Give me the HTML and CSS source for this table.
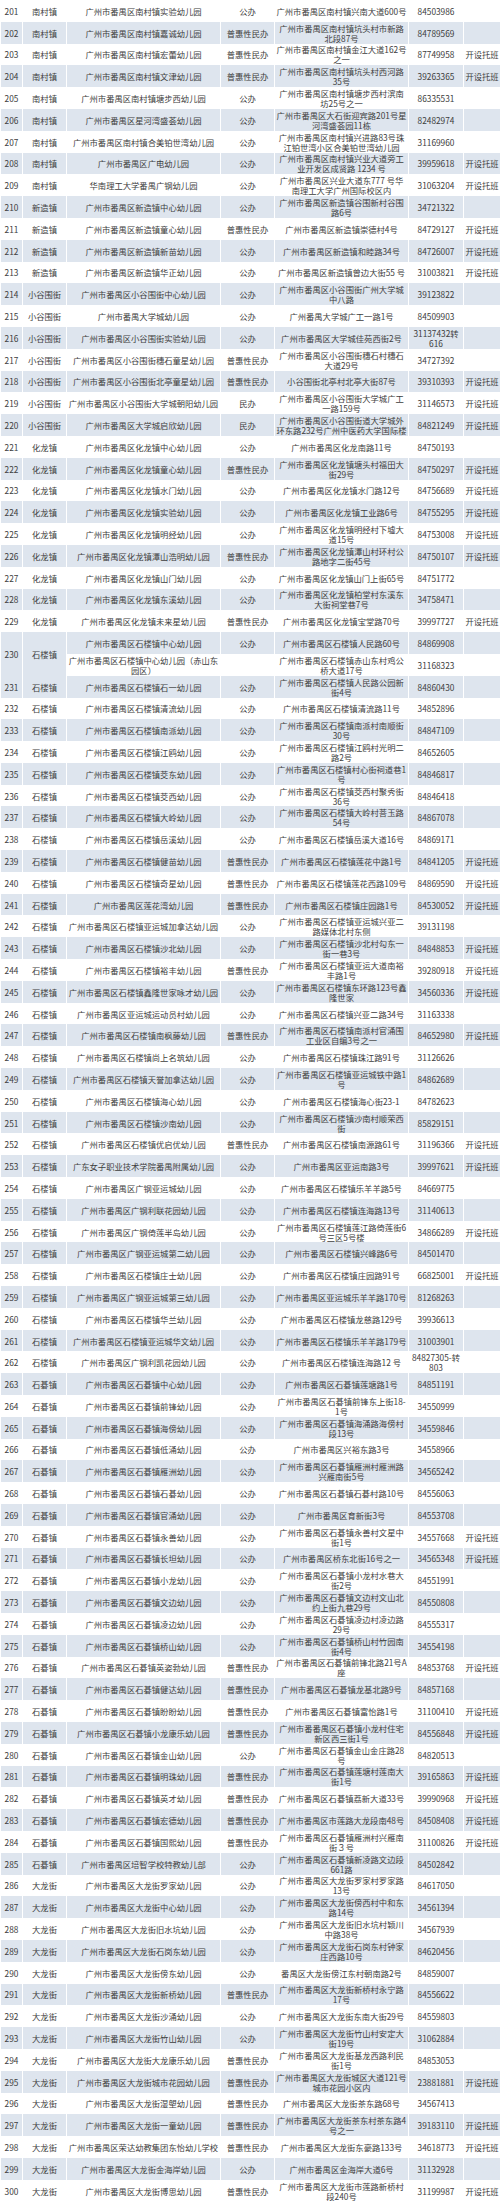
FILE: index.html
```html
<!DOCTYPE html>
<html lang="zh-CN">
<head>
<meta charset="utf-8">
<title>番禺区幼儿园名录</title>
<link rel="stylesheet" href="styles.css">
</head>
<body>
<table class="list">
<colgroup>
<col class="w-no"><col class="w-town"><col class="w-name"><col class="w-type"><col class="w-addr"><col class="w-tel"><col class="w-note">
</colgroup>
<tbody>
<tr><td>201</td><td>南村镇</td><td>广州市番禺区南村镇实验幼儿园</td><td>公办</td><td>广州市番禺区南村镇兴南大道600号</td><td>84503986</td><td></td></tr>
<tr><td>202</td><td>南村镇</td><td>广州市番禺区南村镇嘉诚幼儿园</td><td>普惠性民办</td><td>广州市番禺区南村镇坑头村市新路北段87号</td><td>84789569</td><td></td></tr>
<tr><td>203</td><td>南村镇</td><td>广州市番禺区南村镇宏蕾幼儿园</td><td>普惠性民办</td><td>广州市番禺区南村镇金江大道162号之一</td><td>87749958</td><td>开设托班</td></tr>
<tr><td>204</td><td>南村镇</td><td>广州市番禺区南村镇文津幼儿园</td><td>普惠性民办</td><td>广州市番禺区南村镇坑头村西河路35号</td><td>39263365</td><td>开设托班</td></tr>
<tr><td>205</td><td>南村镇</td><td>广州市番禺区南村镇塘步西幼儿园</td><td>公办</td><td>广州市番禺区南村镇塘步西村滨南坊25号之一</td><td>86335531</td><td></td></tr>
<tr><td>206</td><td>南村镇</td><td>广州市番禺区星河湾盛荟幼儿园</td><td>公办</td><td>广州市番禺区大石街迎宾路201号星河湾盛荟园11栋</td><td>82482974</td><td></td></tr>
<tr><td>207</td><td>南村镇</td><td>广州市番禺区南村镇合美铂世湾幼儿园</td><td>公办</td><td>广州市番禺区南村镇兴进路83号珠江铂世湾小区合美铂世湾幼儿园</td><td>31169960</td><td></td></tr>
<tr><td>208</td><td>南村镇</td><td>广州市番禺区广电幼儿园</td><td>公办</td><td>广州市番禺区南村镇兴业大道旁工业开发区成贤路 1234 号</td><td>39959618</td><td>开设托班</td></tr>
<tr><td>209</td><td>南村镇</td><td>华南理工大学番禺广钢幼儿园</td><td>公办</td><td>广州市番禺区兴业大道东777 号华南理工大学广州国际校区内</td><td>31063204</td><td>开设托班</td></tr>
<tr><td>210</td><td>新造镇</td><td>广州市番禺区新造镇中心幼儿园</td><td>公办</td><td>广州市番禺区新造镇谷围新村谷围路6号</td><td>34721322</td><td></td></tr>
<tr><td>211</td><td>新造镇</td><td>广州市番禺区新造镇童心幼儿园</td><td>普惠性民办</td><td>广州市番禺区新造镇崇德村4号</td><td>84729127</td><td>开设托班</td></tr>
<tr><td>212</td><td>新造镇</td><td>广州市番禺区新造镇新苗幼儿园</td><td>公办</td><td>广州市番禺区新造镇和睦路34号</td><td>84726007</td><td>开设托班</td></tr>
<tr><td>213</td><td>新造镇</td><td>广州市番禺区新造镇华正幼儿园</td><td>公办</td><td>广州市番禺区新造镇曾边大街55 号</td><td>31003821</td><td>开设托班</td></tr>
<tr><td>214</td><td>小谷围街</td><td>广州市番禺区小谷围街中心幼儿园</td><td>公办</td><td>广州市番禺区小谷围街广州大学城中八路</td><td>39123822</td><td></td></tr>
<tr><td>215</td><td>小谷围街</td><td>广州市番禺大学城幼儿园</td><td>公办</td><td>广州番禺大学城广工一路1号</td><td>84509903</td><td></td></tr>
<tr><td>216</td><td>小谷围街</td><td>广州市番禺区小谷围街实验幼儿园</td><td>公办</td><td>广州市番禺区大学城佳苑西街2号</td><td>31137432转616</td><td></td></tr>
<tr><td>217</td><td>小谷围街</td><td>广州市番禺区小谷围街穗石童星幼儿园</td><td>普惠性民办</td><td>广州市番禺区小谷围街穗石村穗石大道29号</td><td>34727392</td><td></td></tr>
<tr><td>218</td><td>小谷围街</td><td>广州市番禺区小谷围街北亭童星幼儿园</td><td>普惠性民办</td><td>小谷围街北亭村北亭大街87号</td><td>39310393</td><td>开设托班</td></tr>
<tr><td>219</td><td>小谷围街</td><td>广州市番禺区小谷围街大学城朝阳幼儿园</td><td>民办</td><td>广州市番禺区小谷围街大学城广工一路159号</td><td>31146573</td><td>开设托班</td></tr>
<tr><td>220</td><td>小谷围街</td><td>广州市番禺区大学城启欣幼儿园</td><td>民办</td><td>广州市番禺区小谷围街道大学城外环东路232号广州中医药大学国际楼</td><td>84821249</td><td>开设托班</td></tr>
<tr><td>221</td><td>化龙镇</td><td>广州市番禺区化龙镇中心幼儿园</td><td>公办</td><td>广州市番禺区化龙南路11号</td><td>84750193</td><td></td></tr>
<tr><td>222</td><td>化龙镇</td><td>广州市番禺区化龙镇童心幼儿园</td><td>普惠性民办</td><td>广州市番禺区化龙镇塘头村福田大街29号</td><td>84750297</td><td>开设托班</td></tr>
<tr><td>223</td><td>化龙镇</td><td>广州市番禺区化龙镇水门幼儿园</td><td>公办</td><td>广州市番禺区化龙镇水门路12号</td><td>84756689</td><td>开设托班</td></tr>
<tr><td>224</td><td>化龙镇</td><td>广州市番禺区化龙镇实验幼儿园</td><td>公办</td><td>广州市番禺区化龙镇工业路6号</td><td>84755295</td><td>开设托班</td></tr>
<tr><td>225</td><td>化龙镇</td><td>广州市番禺区化龙镇明经幼儿园</td><td>公办</td><td>广州市番禺区化龙镇明经村下墟大道15号</td><td>84753008</td><td>开设托班</td></tr>
<tr><td>226</td><td>化龙镇</td><td>广州市番禺区化龙镇潭山浩明幼儿园</td><td>普惠性民办</td><td>广州市番禺区化龙镇潭山村环村公路地字二街45号</td><td>84750107</td><td>开设托班</td></tr>
<tr><td>227</td><td>化龙镇</td><td>广州市番禺区化龙镇山门幼儿园</td><td>公办</td><td>广州市番禺区化龙镇山门上街65号</td><td>84751772</td><td></td></tr>
<tr><td>228</td><td>化龙镇</td><td>广州市番禺区化龙镇东溪幼儿园</td><td>公办</td><td>广州市番禺区化龙镇柏堂村东溪东大街祠堂巷7号</td><td>34758471</td><td></td></tr>
<tr><td>229</td><td>化龙镇</td><td>广州市番禺区化龙镇未来星幼儿园</td><td>普惠性民办</td><td>广州市番禺区化龙镇宝堂路70号</td><td>39997727</td><td>开设托班</td></tr>
<tr><td rowspan="2">230</td><td rowspan="2">石楼镇</td><td>广州市番禺区石楼镇中心幼儿园</td><td>公办</td><td>广州市番禺区石楼镇人民路60号</td><td>84869908</td><td></td></tr>
<tr><td>广州市番禺区石楼镇中心幼儿园（赤山东园区）</td><td></td><td>广州市番禺区石楼镇赤山东村鸡公桥大道17号</td><td>31168323</td><td></td></tr>
<tr><td>231</td><td>石楼镇</td><td>广州市番禺区石楼镇石一幼儿园</td><td>公办</td><td>广州市番禺区石楼镇人民路公园新街4号</td><td>84860430</td><td></td></tr>
<tr><td>232</td><td>石楼镇</td><td>广州市番禺区石楼镇清流幼儿园</td><td>公办</td><td>广州市番禺区石楼镇清流路11号</td><td>34852896</td><td></td></tr>
<tr><td>233</td><td>石楼镇</td><td>广州市番禺区石楼镇南派幼儿园</td><td>公办</td><td>广州市番禺区石楼镇南派村南顺街30号</td><td>84847109</td><td></td></tr>
<tr><td>234</td><td>石楼镇</td><td>广州市番禺区石楼镇江鸥幼儿园</td><td>公办</td><td>广州市番禺区石楼镇江鸥村光明二路2号</td><td>84652605</td><td></td></tr>
<tr><td>235</td><td>石楼镇</td><td>广州市番禺区石楼镇茭东幼儿园</td><td>公办</td><td>广州市番禺区石楼镇村心街祠道巷1号</td><td>84846817</td><td></td></tr>
<tr><td>236</td><td>石楼镇</td><td>广州市番禺区石楼镇茭西幼儿园</td><td>公办</td><td>广州市番禺区石楼镇茭西村聚秀街36号</td><td>84846418</td><td></td></tr>
<tr><td>237</td><td>石楼镇</td><td>广州市番禺区石楼镇大岭幼儿园</td><td>公办</td><td>广州市番禺区石楼镇大岭村菩玉路54号</td><td>84867078</td><td></td></tr>
<tr><td>238</td><td>石楼镇</td><td>广州市番禺区石楼镇岳溪幼儿园</td><td>公办</td><td>广州市番禺区石楼镇岳溪大道16号</td><td>84869171</td><td></td></tr>
<tr><td>239</td><td>石楼镇</td><td>广州市番禺区石楼镇健苗幼儿园</td><td>普惠性民办</td><td>广州市番禺区石楼镇莲花中路1号</td><td>84841205</td><td>开设托班</td></tr>
<tr><td>240</td><td>石楼镇</td><td>广州市番禺区石楼镇奇星幼儿园</td><td>普惠性民办</td><td>广州市番禺区石楼镇莲花西路109号</td><td>84869590</td><td>开设托班</td></tr>
<tr><td>241</td><td>石楼镇</td><td>广州市番禺区莲花湾幼儿园</td><td>普惠性民办</td><td>广州市番禺区石楼镇庄园路1号</td><td>84530052</td><td>开设托班</td></tr>
<tr><td>242</td><td>石楼镇</td><td>广州市番禺区石楼镇亚运城加拿达幼儿园</td><td>公办</td><td>广州市番禺区石楼镇亚运城兴亚二路媒体北村东侧</td><td>39131198</td><td></td></tr>
<tr><td>243</td><td>石楼镇</td><td>广州市番禺区石楼镇沙北幼儿园</td><td>公办</td><td>广州市番禺区石楼镇沙北村勾东一街一巷3号</td><td>84848853</td><td>开设托班</td></tr>
<tr><td>244</td><td>石楼镇</td><td>广州市番禺区石楼镇裕丰幼儿园</td><td>普惠性民办</td><td>广州市番禺区石楼镇亚运大道南裕丰路1号</td><td>39280918</td><td>开设托班</td></tr>
<tr><td>245</td><td>石楼镇</td><td>广州市番禺区石楼镇鑫隆世家咏才幼儿园</td><td>公办</td><td>广州市番禺区石楼镇东环路123号鑫隆世家</td><td>34560336</td><td>开设托班</td></tr>
<tr><td>246</td><td>石楼镇</td><td>广州市番禺区亚运城运动员村幼儿园</td><td>公办</td><td>广州市番禺区石楼镇兴亚二路34号</td><td>31163338</td><td></td></tr>
<tr><td>247</td><td>石楼镇</td><td>广州市番禺区石楼镇南枫藤幼儿园</td><td>普惠性民办</td><td>广州市番禺区石楼镇南派村官涌围工业区自编3号之一</td><td>84652980</td><td>开设托班</td></tr>
<tr><td>248</td><td>石楼镇</td><td>广州市番禺区石楼镇尚上名筑幼儿园</td><td>公办</td><td>广州市番禺区石楼镇珠江路91号</td><td>31126626</td><td></td></tr>
<tr><td>249</td><td>石楼镇</td><td>广州市番禺区石楼镇天誉加拿达幼儿园</td><td>公办</td><td>广州市番禺区石楼镇亚运城铁中路1号</td><td>84862689</td><td></td></tr>
<tr><td>250</td><td>石楼镇</td><td>广州市番禺区石楼镇海心幼儿园</td><td>公办</td><td>广州市番禺区石楼镇海心街23-1</td><td>84782623</td><td></td></tr>
<tr><td>251</td><td>石楼镇</td><td>广州市番禺区石楼镇沙南幼儿园</td><td>公办</td><td>广州市番禺区石楼镇沙南村顺荣西街</td><td>85829151</td><td></td></tr>
<tr><td>252</td><td>石楼镇</td><td>广州市番禺区石楼镇优启优幼儿园</td><td>普惠性民办</td><td>广州市番禺区石楼镇南源路61号</td><td>31196366</td><td>开设托班</td></tr>
<tr><td>253</td><td>石楼镇</td><td>广东女子职业技术学院番禺附属幼儿园</td><td>公办</td><td>广州市番禺区亚运南路3号</td><td>39997621</td><td>开设托班</td></tr>
<tr><td>254</td><td>石楼镇</td><td>广州市番禺区广钢亚运城幼儿园</td><td>公办</td><td>广州市番禺区石楼镇乐羊羊路5号</td><td>84669775</td><td></td></tr>
<tr><td>255</td><td>石楼镇</td><td>广州市番禺区广钢利联花园幼儿园</td><td>公办</td><td>广州市番禺区石楼镇连海路13号</td><td>31140613</td><td></td></tr>
<tr><td>256</td><td>石楼镇</td><td>广州市番禺区广钢倚莲半岛幼儿园</td><td>公办</td><td>广州市番禺区石楼镇莲江路倚莲街6号三区5号楼</td><td>34866289</td><td>开设托班</td></tr>
<tr><td>257</td><td>石楼镇</td><td>广州市番禺区广钢亚运城第二幼儿园</td><td>公办</td><td>广州市番禺区石楼镇兴峰路6号</td><td>84501470</td><td></td></tr>
<tr><td>258</td><td>石楼镇</td><td>广州市番禺区石楼镇庄士幼儿园</td><td>公办</td><td>广州市番禺区石楼镇庄园路91号</td><td>66825001</td><td>开设托班</td></tr>
<tr><td>259</td><td>石楼镇</td><td>广州市番禺区广钢亚运城第三幼儿园</td><td>公办</td><td>广州市番禺区亚运城乐羊羊路170号</td><td>81268263</td><td></td></tr>
<tr><td>260</td><td>石楼镇</td><td>广州市番禺区石楼镇华兰幼儿园</td><td>公办</td><td>广州市番禺区石楼镇龙慈路129号</td><td>39936613</td><td></td></tr>
<tr><td>261</td><td>石楼镇</td><td>广州市番禺区石楼镇亚运城华文幼儿园</td><td>公办</td><td>广州市番禺区石楼镇乐羊羊路179号</td><td>31003901</td><td></td></tr>
<tr><td>262</td><td>石楼镇</td><td>广州市番禺区广钢利凯花园幼儿园</td><td>公办</td><td>广州市番禺区石楼镇连海路12 号</td><td>84827305-转803</td><td></td></tr>
<tr><td>263</td><td>石碁镇</td><td>广州市番禺区石碁镇中心幼儿园</td><td>公办</td><td>广州市番禺区石碁镇莲塘路1号</td><td>84851191</td><td></td></tr>
<tr><td>264</td><td>石碁镇</td><td>广州市番禺区石碁镇前锋幼儿园</td><td>公办</td><td>广州市番禺区石碁镇前锋东上街18-1号</td><td>34550999</td><td></td></tr>
<tr><td>265</td><td>石碁镇</td><td>广州市番禺区石碁镇海傍幼儿园</td><td>公办</td><td>广州市番禺区石碁镇海涌路海傍村段13号</td><td>34559846</td><td></td></tr>
<tr><td>266</td><td>石碁镇</td><td>广州市番禺区石碁镇低涌幼儿园</td><td>公办</td><td>广州市番禺区兴裕东路3号</td><td>34558966</td><td></td></tr>
<tr><td>267</td><td>石碁镇</td><td>广州市番禺区石碁镇雁洲幼儿园</td><td>公办</td><td>广州市番禺区石碁镇雁洲村雁洲路兴雁南街5号</td><td>34565242</td><td></td></tr>
<tr><td>268</td><td>石碁镇</td><td>广州市番禺区石碁镇石碁幼儿园</td><td>公办</td><td>广州市番禺区石碁镇石碁村路10号</td><td>84556063</td><td></td></tr>
<tr><td>269</td><td>石碁镇</td><td>广州市番禺区石碁镇官涌幼儿园</td><td>公办</td><td>广州市番禺区育新街3号</td><td>84553708</td><td></td></tr>
<tr><td>270</td><td>石碁镇</td><td>广州市番禺区石碁镇永善幼儿园</td><td>公办</td><td>广州市番禺区石碁镇永善村文星中街1号</td><td>34557668</td><td>开设托班</td></tr>
<tr><td>271</td><td>石碁镇</td><td>广州市番禺区石碁镇长坦幼儿园</td><td>公办</td><td>广州市番禺区桥东北街16号之一</td><td>34565348</td><td>开设托班</td></tr>
<tr><td>272</td><td>石碁镇</td><td>广州市番禺区石碁镇小龙幼儿园</td><td>公办</td><td>广州市番禺区石碁镇小龙村水巷大街2号</td><td>84551991</td><td></td></tr>
<tr><td>273</td><td>石碁镇</td><td>广州市番禺区石碁镇文边幼儿园</td><td>公办</td><td>广州市番禺区石碁镇文边村文山北约上街九巷29号</td><td>84550808</td><td></td></tr>
<tr><td>274</td><td>石碁镇</td><td>广州市番禺区石碁镇凌边幼儿园</td><td>公办</td><td>广州市番禺区石碁镇凌边村凌边路29号</td><td>84555317</td><td></td></tr>
<tr><td>275</td><td>石碁镇</td><td>广州市番禺区石碁镇桥山幼儿园</td><td>公办</td><td>广州市番禺区石碁镇桥山村竹园南街4号</td><td>34554198</td><td></td></tr>
<tr><td>276</td><td>石碁镇</td><td>广州市番禺区石碁镇英姿勃幼儿园</td><td>普惠性民办</td><td>广州市番禺区石碁镇前锋北路21号A座</td><td>84853768</td><td>开设托班</td></tr>
<tr><td>277</td><td>石碁镇</td><td>广州市番禺区石碁镇健达幼儿园</td><td>普惠性民办</td><td>广州市番禺区石碁镇龙基北路9号</td><td>84857168</td><td></td></tr>
<tr><td>278</td><td>石碁镇</td><td>广州市番禺区石碁镇盼盼幼儿园</td><td>普惠性民办</td><td>广州市番禺区石碁镇富怡路1号</td><td>31100410</td><td>开设托班</td></tr>
<tr><td>279</td><td>石碁镇</td><td>广州市番禺区石碁镇小龙康乐幼儿园</td><td>普惠性民办</td><td>广州市番番禺区石碁镇小龙村住宅新区西三街1号</td><td>84556848</td><td>开设托班</td></tr>
<tr><td>280</td><td>石碁镇</td><td>广州市番禺区石碁镇金山幼儿园</td><td>公办</td><td>广州市番禺区石碁镇金山金庄路28号</td><td>84820513</td><td></td></tr>
<tr><td>281</td><td>石碁镇</td><td>广州市番禺区石碁镇明珠幼儿园</td><td>普惠性民办</td><td>广州市番禺区石碁镇莲塘村莲南大街1号</td><td>39165863</td><td>开设托班</td></tr>
<tr><td>282</td><td>石碁镇</td><td>广州市番禺区石碁镇英才幼儿园</td><td>普惠性民办</td><td>广州市番禺区石碁镇荔新大道33号</td><td>39990968</td><td>开设托班</td></tr>
<tr><td>283</td><td>石碁镇</td><td>广州市番禺区石碁镇宏德幼儿园</td><td>普惠性民办</td><td>广州市番禺区市莲路大龙段南48号</td><td>84508408</td><td>开设托班</td></tr>
<tr><td>284</td><td>石碁镇</td><td>广州市番禺区石碁镇国熙幼儿园</td><td>普惠性民办</td><td>广州市番禺区石碁镇雁洲村兴雁南街３号</td><td>31100826</td><td>开设托班</td></tr>
<tr><td>285</td><td>石碁镇</td><td>广州市番禺区培智学校特教幼儿部</td><td>公办</td><td>广州市番禺区石碁镇新凌路文边段661路</td><td>84502842</td><td></td></tr>
<tr><td>286</td><td>大龙街</td><td>广州市番禺区大龙街罗家幼儿园</td><td>公办</td><td>广州市番禺区大龙街罗家村罗家路13号</td><td>84617050</td><td></td></tr>
<tr><td>287</td><td>大龙街</td><td>广州市番禺区大龙街中心幼儿园</td><td>公办</td><td>广州市番禺区大龙街傍西村中和东路14号</td><td>34561394</td><td></td></tr>
<tr><td>288</td><td>大龙街</td><td>广州市番禺区大龙街旧水坑幼儿园</td><td>公办</td><td>广州市番禺区大龙街旧水坑村颖川中路38号</td><td>34567939</td><td></td></tr>
<tr><td>289</td><td>大龙街</td><td>广州市番禺区大龙街石岗东幼儿园</td><td>公办</td><td>广州市番禺区大龙街石岗东村钟家庄西路10号</td><td>84620456</td><td></td></tr>
<tr><td>290</td><td>大龙街</td><td>广州市番禺区大龙街傍东幼儿园</td><td>公办</td><td>番禺区大龙街傍江东村朝南路2号</td><td>84859007</td><td></td></tr>
<tr><td>291</td><td>大龙街</td><td>广州市番禺区大龙街新桥幼儿园</td><td>普惠性民办</td><td>广州市番禺区大龙街新桥村永宁路17号</td><td>84556622</td><td></td></tr>
<tr><td>292</td><td>大龙街</td><td>广州市番禺区大龙街沙涌幼儿园</td><td>公办</td><td>广州市番禺区大龙街东南大街29号</td><td>84559803</td><td></td></tr>
<tr><td>293</td><td>大龙街</td><td>广州市番禺区大龙街竹山幼儿园</td><td>公办</td><td>广州市番禺区大龙街竹山村安定大街19号</td><td>31062884</td><td></td></tr>
<tr><td>294</td><td>大龙街</td><td>广州市番禺区大龙街大龙康乐幼儿园</td><td>普惠性民办</td><td>广州市番禺区大龙街基龙西路利民街1号</td><td>84853053</td><td></td></tr>
<tr><td>295</td><td>大龙街</td><td>广州市番禺区大龙街城市花园幼儿园</td><td>普惠性民办</td><td>广州市番禺区大龙街城区大道121号城市花园小区内</td><td>23881881</td><td>开设托班</td></tr>
<tr><td>296</td><td>大龙街</td><td>广州市番禺区大龙街湿塱幼儿园</td><td>普惠性民办</td><td>广州市番禺区大龙街茶东路68号</td><td>34567413</td><td></td></tr>
<tr><td>297</td><td>大龙街</td><td>广州市番禺区大龙街一童幼儿园</td><td>普惠性民办</td><td>广州市番禺区大龙街茶东村茶东路4号之一</td><td>39183110</td><td>开设托班</td></tr>
<tr><td>298</td><td>大龙街</td><td>广州市番禺区荣达幼教集团东怡幼儿学校</td><td>普惠性民办</td><td>广州市番禺区大龙街东豪路133号</td><td>34618773</td><td>开设托班</td></tr>
<tr><td>299</td><td>大龙街</td><td>广州市番禺区大龙街金海岸幼儿园</td><td>公办</td><td>广州市番禺区金海岸大道6号</td><td>31132928</td><td></td></tr>
<tr><td>300</td><td>大龙街</td><td>广州市番禺区大龙街博思幼儿园</td><td>普惠性民办</td><td>广州市番禺区大龙街市莲路新桥村段240号</td><td>31199987</td><td>开设托班</td></tr>
</tbody>
</table>
</body>
</html>
```
FILE: styles.css
```css
html, body {
  margin: 0;
  padding: 0;
  background: #ffffff;
}

body {
  width: 500px;
  overflow: hidden;
  font-family: "Noto Sans CJK SC", "Noto Sans", sans-serif;
  color: #3d3d3d;
}

.list {
  width: 500px;
  table-layout: fixed;
  border-collapse: collapse;
  border-spacing: 0;
  font-size: 8.3px;
  line-height: 10px;
}

.w-no { width: 22px; }
.w-town { width: 44px; }
.w-name { width: 154px; }
.w-type { width: 54px; }
.w-addr { width: 134px; }
.w-tel { width: 55px; }
.w-note { width: 37px; }

.list tr {
  height: 21.81px;
}

.list tr:nth-child(even) {
  background: #dee5ee;
}

.list td {
  padding: 0 1px;
  text-align: center;
  vertical-align: middle;
  border-left: 1px solid #ffffff;
  border-right: 1px solid #ffffff;
  word-break: normal;
}

.list td:last-child {
  white-space: nowrap;
  overflow: hidden;
  padding: 0;
}
```
